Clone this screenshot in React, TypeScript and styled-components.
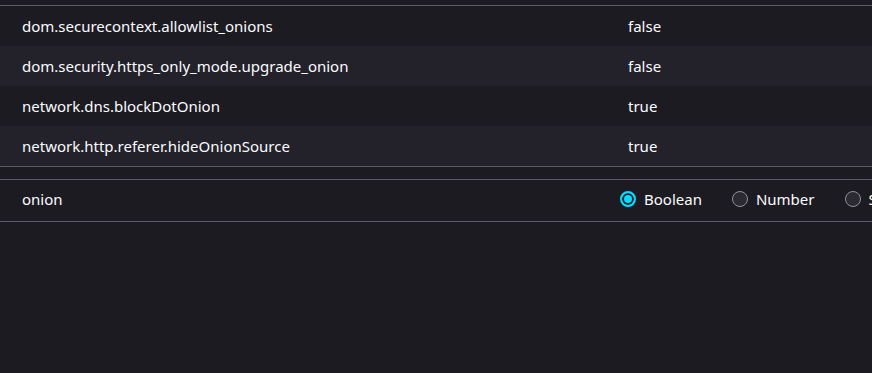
import styled, { createGlobalStyle } from 'styled-components';

const GlobalStyle = createGlobalStyle`
  html, body {
    margin: 0;
    padding: 0;
    background: #1c1b22;
    color: #fbfbfe;
    font-family: "Noto Sans", "Open Sans", sans-serif;
    font-size: 15px;
  }
`;

const prefs = [
  { name: 'dom.securecontext.allowlist_onions', value: 'false' },
  { name: 'dom.security.https_only_mode.upgrade_onion', value: 'false' },
  { name: 'network.dns.blockDotOnion', value: 'true' },
  { name: 'network.http.referer.hideOnionSource', value: 'true' },
];

const Page = styled.div`
  width: 872px;
  height: 373px;
  overflow: hidden;
  padding-top: 5px;
  box-sizing: border-box;
`;

const Table = styled.div`
  border-top: 1px solid #5b5b66;
  border-bottom: 1px solid #5b5b66;
`;

const Row = styled.div<{ $alt?: boolean }>`
  display: grid;
  grid-template-columns: 628px 1fr;
  height: 40px;
  align-items: center;
  background: ${(p) => (p.$alt ? '#23222b' : '#1c1b22')};
`;

const Name = styled.div`
  padding-left: 22px;
  white-space: nowrap;
`;

const Value = styled.div`
  white-space: nowrap;
`;

const AddRow = styled.div`
  margin-top: 12px;
  display: grid;
  grid-template-columns: 620px 1fr;
  height: 38px;
  padding-bottom: 3px;
  align-items: center;
  border-top: 1px solid #5b5b66;
  border-bottom: 1px solid #5b5b66;
`;

const Types = styled.div`
  display: flex;
  align-items: center;
  white-space: nowrap;
`;

const Option = styled.label`
  display: flex;
  align-items: center;
  margin-right: 30px;
`;

const Radio = styled.span<{ $checked?: boolean }>`
  width: 16px;
  height: 16px;
  box-sizing: border-box;
  border-radius: 50%;
  margin-right: 8px;
  flex-shrink: 0;
  border: ${(p) => (p.$checked ? '2px solid #00ddff' : '1px solid #8f8f9d')};
  background: ${(p) => (p.$checked ? '#00ddff' : '#2b2a33')};
  box-shadow: ${(p) => (p.$checked ? 'inset 0 0 0 2px #1c1b22' : 'none')};
`;

export default function App() {
  return (
    <Page>
      <GlobalStyle />
      <Table>
        {prefs.map((p, i) => (
          <Row key={p.name} $alt={i % 2 === 1}>
            <Name>{p.name}</Name>
            <Value>{p.value}</Value>
          </Row>
        ))}
      </Table>
      <AddRow>
        <Name>onion</Name>
        <Types>
          <Option>
            <Radio $checked />
            Boolean
          </Option>
          <Option>
            <Radio />
            Number
          </Option>
          <Option>
            <Radio />
            String
          </Option>
        </Types>
      </AddRow>
    </Page>
  );
}
